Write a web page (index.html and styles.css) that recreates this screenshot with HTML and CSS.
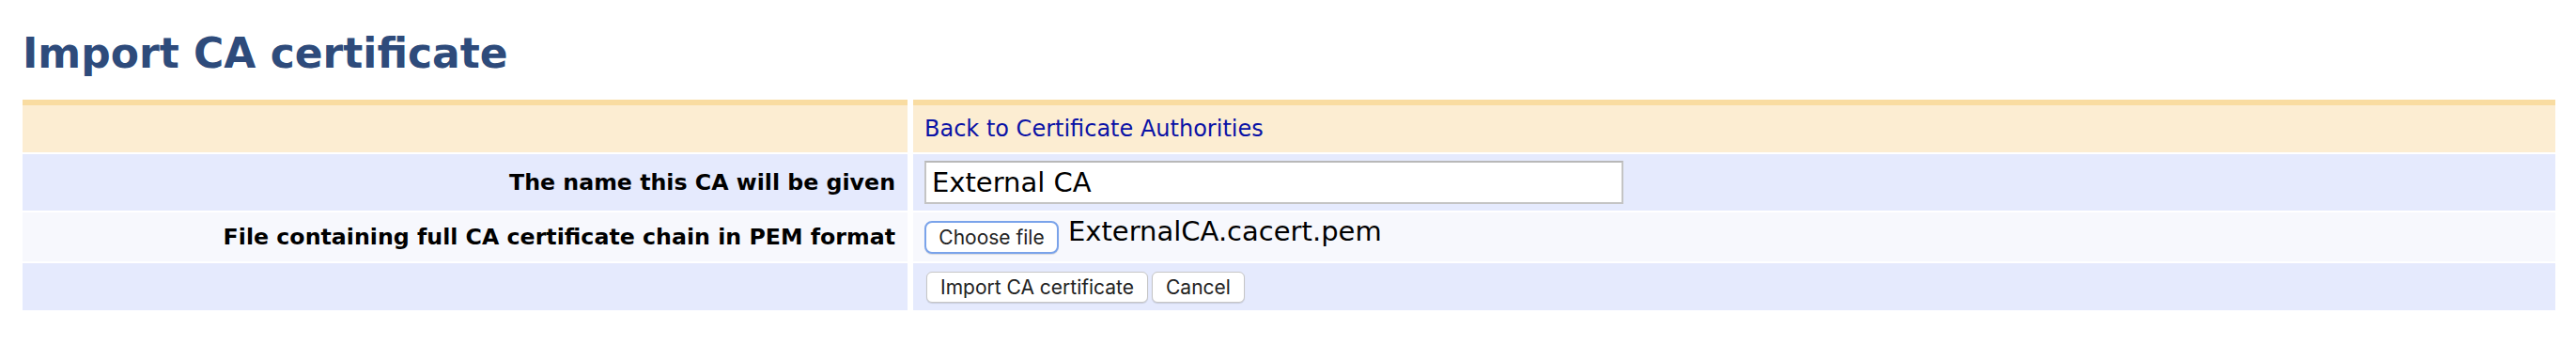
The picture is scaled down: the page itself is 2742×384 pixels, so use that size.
FILE: index.html
```html
<!DOCTYPE html>
<html lang="en">
<head>
<meta charset="utf-8">
<title>Import CA certificate</title>
<link rel="stylesheet" href="styles.css">
</head>
<body>
<h1 class="title">Import CA certificate</h1>
<form class="form-table">
  <div class="cell head"></div>
  <div class="cell head field"><a class="back-link" href="#">Back to Certificate Authorities</a></div>

  <div class="cell label row-a">The name this CA will be given</div>
  <div class="cell field row-a"><input class="text-input" type="text" value="External CA"></div>

  <div class="cell label row-b">File containing full CA certificate chain in PEM format</div>
  <div class="cell field row-b file-row"><button type="button" class="btn btn-focus">Choose file</button><span class="file-name">ExternalCA.cacert.pem</span></div>

  <div class="cell label row-c"></div>
  <div class="cell field row-c buttons"><button type="button" class="btn">Import CA certificate</button><button type="button" class="btn">Cancel</button></div>
</form>
</body>
</html>
```

FILE: styles.css
```css
html, body {
  margin: 0;
  padding: 0;
  background: #ffffff;
}

body {
  font-family: "DejaVu Sans", Verdana, sans-serif;
  color: #000;
}

.title {
  margin: 31px 0 0 24px;
  font-size: 44px;
  font-weight: bold;
  color: #2e4b7b;
  line-height: 51px;
}

.form-table {
  margin: 24px 22px 0 24px;
  display: grid;
  grid-template-columns: 942px 1fr;
  grid-template-rows: 56px 60px 52px 50px;
  column-gap: 6px;
  row-gap: 2px;
}

.cell {
  display: flex;
  align-items: center;
  box-sizing: border-box;
  padding: 0 13px;
}

.head {
  background: #fcedd2;
  border-top: 6px solid #f9dca1;
}

.row-a, .row-c {
  background: #e5eafd;
}

.row-b {
  background: #f7f8fd;
}

.label {
  justify-content: flex-end;
  font-weight: bold;
  font-size: 23.7px;
}

.field {
  padding-left: 12px;
}

.back-link {
  color: #0a12a6;
  text-decoration: none;
  font-size: 24px;
}

.text-input {
  box-sizing: border-box;
  width: 744px;
  height: 46px;
  margin: 0;
  padding: 0 6px;
  border: 2px solid #c4c4c4;
  border-top-color: #b8b8b8;
  background: #fff;
  font-family: "DejaVu Sans", Verdana, sans-serif;
  font-size: 29px;
  color: #000;
  outline: none;
}

.btn {
  box-sizing: border-box;
  height: 33px;
  margin: 0 4px 0 0;
  padding: 0 14px;
  background: #ffffff;
  border: 1px solid #c6c6c6;
  border-radius: 6px;
  box-shadow: 0 1px 1px rgba(0, 0, 0, 0.12);
  font-family: Inter, "Liberation Sans", sans-serif;
  font-size: 21px;
  color: #222;
}

.btn-focus {
  height: 35px;
  width: 143px;
  padding: 0;
  border: 2px solid #7aa3ea;
  border-radius: 8px;
}

.file-row {
  align-items: center;
}

.file-name {
  margin-left: 6px;
  font-size: 29px;
  position: relative;
  top: -6px;
}

.buttons .btn:first-child {
  margin-left: 2px;
}
```
